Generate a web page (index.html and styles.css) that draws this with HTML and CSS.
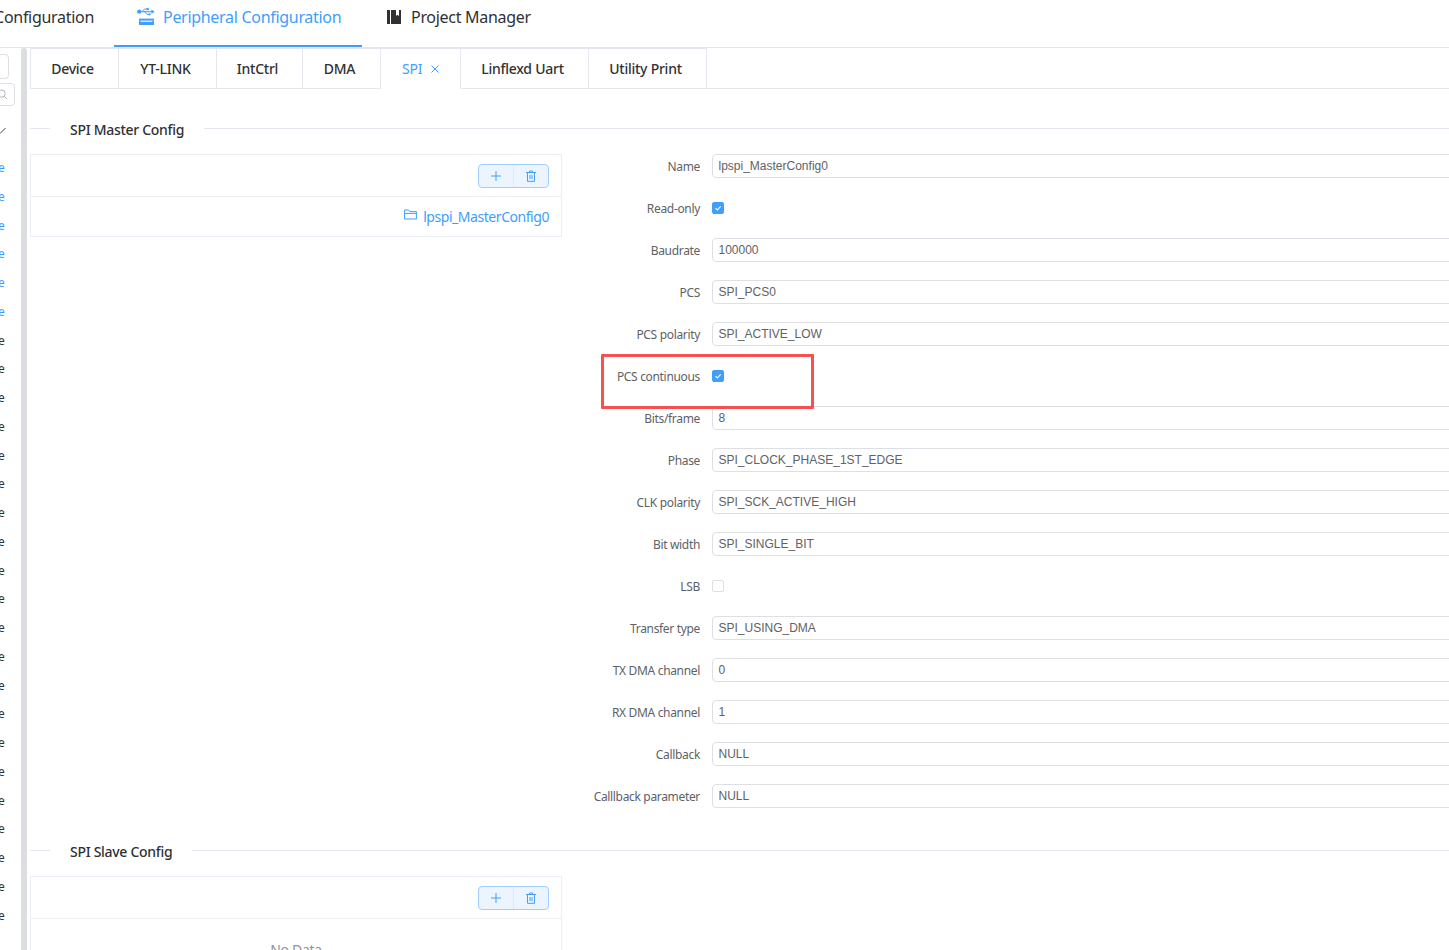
FILE: index.html
```html
<!DOCTYPE html>
<html lang="en">
<head>
<meta charset="utf-8">
<title>Peripheral Configuration</title>
<link rel="stylesheet" href="styles.css">
</head>
<body>
<header class="topnav">
  <div class="nav-item nav-first">Configuration</div>
  <div class="nav-item nav-active">
    <svg class="nav-icon" viewBox="0 0 18 18"><path d="M2 3.7h13" fill="none" stroke="currentColor" stroke-width="1.1"/><circle cx="2.2" cy="3.7" r="2.1"/><path d="M14.4 1.6l3.3 2.1-3.3 2.1z"/><path d="M5 3.7l2.4-2.6h2.6M7.5 3.7l2.4 2.6h2.4" fill="none" stroke="currentColor" stroke-width="1"/><rect x="9.6" y="0" width="2.2" height="2.2"/><circle cx="12.6" cy="6.3" r="1.1"/><rect x="2" y="10.6" width="15" height="2"/><path d="M2 12.6h1.6v1.2h11.8v-1.2H17V17H2z"/></svg>
    <span>Peripheral Configuration</span>
  </div>
  <div class="nav-item">
    <svg class="nav-icon nav-icon-small" viewBox="0 0 14 14"><path d="M0 0h3v14H0zM4 0h5v6l1.2-1.2L12 6V0h2v14H4z"/></svg>
    <span>Project Manager</span>
  </div>
</header>
<div class="workspace">
  <aside class="sidebar">
    <div class="side-content">
      <div class="side-box side-select"></div>
      <div class="side-box side-search"><svg viewBox="0 0 12 12" class="side-search-icon"><circle cx="5" cy="5" r="4"/><path d="M8 8l3 3"/></svg></div>
      <svg class="side-check" viewBox="0 0 7 7"><path d="M0 6.5L5.5 1"/></svg>
      <ul class="side-list">
        <li class="is-blue">e</li><li class="is-blue">e</li><li class="is-blue">e</li><li class="is-blue">e</li><li class="is-blue">e</li><li class="is-blue">e</li>
        <li>e</li><li>e</li><li>e</li><li>e</li><li>e</li><li>e</li><li>e</li><li>e</li><li>e</li><li>e</li><li>e</li><li>e</li><li>e</li><li>e</li><li>e</li><li>e</li><li>e</li><li>e</li><li>e</li><li>e</li><li>e</li>
      </ul>
    </div>
    <div class="side-scrollbar"></div>
  </aside>
  <main class="main">
    <nav class="tabs">
      <div class="tab">Device</div>
      <div class="tab">YT-LINK</div>
      <div class="tab">IntCtrl</div>
      <div class="tab">DMA</div>
      <div class="tab tab-active">SPI<svg class="tab-close" viewBox="0 0 10 10"><path d="M1.5 1.5l7 7M8.5 1.5l-7 7"/></svg></div>
      <div class="tab">Linflexd Uart</div>
      <div class="tab">Utility Print</div>
    </nav>
    <div class="divider divider-first"><span>SPI Master Config</span></div>
    <section class="config">
      <div class="list-panel">
        <div class="list-toolbar">
          <div class="btn-group">
            <div class="btn"><svg viewBox="0 0 12 12"><path d="M6 1v10M1 6h10"/></svg></div>
            <div class="btn"><svg viewBox="0 0 12 12"><path d="M1 2.5h10M4.5 2.5V1h3v1.5M2.5 2.5v8.8h7V2.5M5 5v4M7 5v4"/></svg></div>
          </div>
        </div>
        <div class="list-row">
          <svg class="folder" viewBox="0 0 13 11"><path d="M.6 10V1h4l1.2 1.6h6.6V10zM.6 4.4h11.8"/></svg>
          <span>lpspi_MasterConfig0</span>
        </div>
      </div>
      <form class="form">
        <div class="highlight"></div>
        <div class="row"><label>Name</label><div class="input">lpspi_MasterConfig0</div></div>
        <div class="row"><label>Read-only</label><span class="check checked"><svg viewBox="0 0 12 12"><path d="M3 6.2l2.2 2.2L9.2 4"/></svg></span></div>
        <div class="row"><label>Baudrate</label><div class="input">100000</div></div>
        <div class="row"><label>PCS</label><div class="input">SPI_PCS0</div></div>
        <div class="row"><label>PCS polarity</label><div class="input">SPI_ACTIVE_LOW</div></div>
        <div class="row"><label>PCS continuous</label><span class="check checked"><svg viewBox="0 0 12 12"><path d="M3 6.2l2.2 2.2L9.2 4"/></svg></span></div>
        <div class="row"><label>Bits/frame</label><div class="input">8</div></div>
        <div class="row"><label>Phase</label><div class="input">SPI_CLOCK_PHASE_1ST_EDGE</div></div>
        <div class="row"><label>CLK polarity</label><div class="input">SPI_SCK_ACTIVE_HIGH</div></div>
        <div class="row"><label>Bit width</label><div class="input">SPI_SINGLE_BIT</div></div>
        <div class="row"><label>LSB</label><span class="check"></span></div>
        <div class="row"><label>Transfer type</label><div class="input">SPI_USING_DMA</div></div>
        <div class="row"><label>TX DMA channel</label><div class="input">0</div></div>
        <div class="row"><label>RX DMA channel</label><div class="input">1</div></div>
        <div class="row"><label>Callback</label><div class="input">NULL</div></div>
        <div class="row"><label>Calllback parameter</label><div class="input">NULL</div></div>
      </form>
    </section>
    <div class="divider divider-second"><span>SPI Slave Config</span></div>
    <section class="config">
      <div class="list-panel">
        <div class="list-toolbar">
          <div class="btn-group">
            <div class="btn"><svg viewBox="0 0 12 12"><path d="M6 1v10M1 6h10"/></svg></div>
            <div class="btn"><svg viewBox="0 0 12 12"><path d="M1 2.5h10M4.5 2.5V1h3v1.5M2.5 2.5v8.8h7V2.5M5 5v4M7 5v4"/></svg></div>
          </div>
        </div>
        <div class="list-empty">No Data</div>
      </div>
    </section>
  </main>
</div>
</body>
</html>
```
FILE: styles.css
```css
* { box-sizing: border-box; }
html, body { margin: 0; height: 950px; overflow: hidden; background: #fff; }
body { font-family: "Noto Sans", "Noto Sans CJK SC", sans-serif; color: #303133; }

.topnav { display: flex; height: 48px; border-bottom: 1px solid #e4e7ed; margin-left: -20px; }
.nav-item { display: flex; align-items: center; gap: 8px; height: 47px; padding: 0 20px 13px; font-size: 16px; letter-spacing: -0.3px; white-space: nowrap; margin-right: 4px; }
.nav-first { padding-left: 0; width: 134px; justify-content: flex-end; margin-right: 0; }
.nav-active { color: #409eff; border-bottom: 2px solid #409eff; width: 248px; padding-bottom: 11px; padding-left: 23px; margin-right: 5px; }
.nav-icon { width: 18px; height: 18px; fill: currentColor; flex: none; }
.nav-icon-small { width: 14px; height: 14px; margin-right: 2px; }

.workspace { display: flex; height: 902px; }
.sidebar { display: flex; width: 30px; flex: none; }
.side-content { width: 21px; overflow: hidden; position: relative; }
.side-box { border: 1px solid #dcdfe6; border-radius: 4px; background: #fff; }
.side-select { width: 20px; height: 25px; margin: 6px 0 0 -11px; }
.side-search { width: 20px; height: 23px; margin: 4px 0 0 -5px; display: flex; align-items: center; justify-content: flex-end; padding-right: 6px; }
.side-search-icon { width: 11px; height: 11px; flex: none; fill: none; stroke: #a8abb2; stroke-width: 1; }
.side-check { display: block; width: 7px; height: 7px; margin: 21px 0 0 0; fill: none; stroke: #444; stroke-width: 1; }
.side-list { list-style: none; margin: 20px 0 0; padding: 0; }
.side-list li { height: 28.75px; line-height: 28.75px; font-size: 12px; margin-left: -2px; color: #303133; }
.side-list li.is-blue { color: #409eff; }
.side-scrollbar { width: 6px; background: #dcdde0; border-radius: 3px 3px 0 0; }

.main { flex: 1; min-width: 0; }
.tabs { display: grid; grid-template-columns: 89px 98px 86px 78px 80px 128px 118px; height: 41px; border-bottom: 1px solid #e4e7ed; }
.tab { display: flex; align-items: center; justify-content: center; height: 41px; padding-right: 4px; font-size: 14px; font-weight: 500; letter-spacing: -0.25px; white-space: nowrap; border: 1px solid #e4e7ed; border-left: 0; }
.tab:first-child { border-left: 1px solid #e4e7ed; }
.tab-active { color: #409eff; border-bottom-color: #fff; justify-content: flex-start; gap: 8px; font-weight: 400; padding-left: 21px; padding-right: 0; }
.tab-close { width: 10px; height: 10px; fill: none; stroke: #409eff; stroke-width: 1; }

.divider { position: relative; height: 1px; background: #e4e7ed; }
.divider span { position: absolute; left: 20px; top: -8px; padding: 0 20px; background: #fff; font-size: 14px; line-height: 20px; font-weight: 500; letter-spacing: -0.3px; white-space: nowrap; }
.divider-first { margin-top: 39px; }
.divider-second { margin-top: 42px; }

.config { display: flex; align-items: flex-start; margin-top: 25px; }
.list-panel { width: 532px; flex: none; border: 1px solid #ebeef5; }
.list-toolbar { display: flex; justify-content: flex-end; align-items: center; height: 42px; padding-right: 12px; border-bottom: 1px solid #ebeef5; }
.btn-group { display: flex; width: 71px; height: 24px; margin-top: 1px; background: #ecf5ff; border: 1px solid #a0cfff; border-radius: 4px; }
.btn { flex: 1; display: flex; align-items: center; justify-content: center; }
.btn + .btn { border-left: 1px solid #d9ecff; }
.btn svg { width: 12px; height: 12px; fill: none; stroke: #409eff; stroke-width: 1; }
.list-row { display: flex; align-items: center; justify-content: flex-end; gap: 6px; height: 39px; padding: 0 12px 1px 0; color: #409eff; font-size: 14px; letter-spacing: -0.45px; }
.folder { width: 13px; height: 11px; fill: none; stroke: #409eff; stroke-width: 1; margin-top: -3px; }
.list-empty { height: 60px; padding-top: 21px; text-align: center; font-size: 14px; color: #909399; line-height: 20px; letter-spacing: -0.3px; }

.form { flex: 1; position: relative; min-width: 0; margin-right: -10px; }
.row { display: flex; align-items: center; height: 24px; margin-bottom: 18px; }
.row:last-child { margin-bottom: 0; }
.row label { width: 138px; flex: none; margin-right: 12px; text-align: right; font-size: 12px; letter-spacing: -0.33px; white-space: nowrap; color: #606266; line-height: 24px; padding-top: 2px; }
.input { flex: 1; height: 24px; line-height: 23px; padding: 0 5.5px; font-family: "Liberation Sans", Arial, sans-serif; font-size: 12px; color: #606266; border: 1px solid #dcdfe6; border-radius: 4px; }
.check { width: 12px; height: 12px; border: 1px solid #dcdfe6; border-radius: 2px; background: #fff; display: block; }
.check.checked { background: #409eff; border-color: #409eff; }
.check svg { display: block; width: 10px; height: 10px; fill: none; stroke: #fff; stroke-width: 1.3; }
.highlight { position: absolute; left: 39px; top: 200px; width: 213px; height: 55px; border: 3px solid #f55151; border-radius: 1px; z-index: 1; }
```
